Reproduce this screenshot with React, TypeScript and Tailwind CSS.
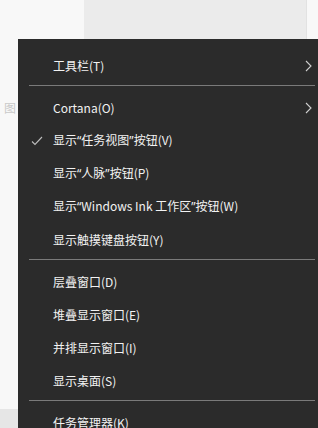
import { Fragment } from 'react'

type Item = { label: string; sub?: boolean; checked?: boolean } | 'sep'

const items: Item[] = [
  { label: '工具栏(T)', sub: true },
  'sep',
  { label: 'Cortana(O)', sub: true },
  { label: '显示“任务视图”按钮(V)', checked: true },
  { label: '显示“人脉”按钮(P)' },
  { label: '显示“Windows Ink 工作区”按钮(W)' },
  { label: '显示触摸键盘按钮(Y)' },
  'sep',
  { label: '层叠窗口(D)' },
  { label: '堆叠显示窗口(E)' },
  { label: '并排显示窗口(I)' },
  { label: '显示桌面(S)' },
  'sep',
  { label: '任务管理器(K)' },
]

// curly quotes are narrow in the original font, render them with a latin face
function Label({ text }: { text: string }) {
  const parts = text.split(/([“”])/)
  return (
    <>
      {parts.map((p, i) =>
        p === '“' || p === '”' ? (
          <span key={i} style={{ fontFamily: '"Noto Sans", sans-serif' }}>
            {p}
          </span>
        ) : (
          <Fragment key={i}>{p}</Fragment>
        )
      )}
    </>
  )
}

function Chevron() {
  return (
    <svg width="7" height="12" viewBox="0 0 7 12" className="text-[#cfcfcf]">
      <polyline points="1,1 6,6 1,11" fill="none" stroke="currentColor" strokeWidth="1.1" />
    </svg>
  )
}

function Check() {
  return (
    <svg width="12" height="10" viewBox="0 0 12 10" className="text-[#bdbdbd]">
      <polyline points="1,5.5 4,8.5 11,1" fill="none" stroke="currentColor" strokeWidth="1.1" />
    </svg>
  )
}

export default function App() {
  return (
    <div
      className="relative h-[428px] w-[318px] overflow-hidden bg-[#f8f8f8]"
      style={{ fontFamily: '"Noto Sans CJK SC", "Noto Sans", sans-serif' }}
    >
      {/* Background window content */}
      <div className="flex h-[39px]">
        <div className="w-[84px]" />
        <div className="w-[222px] bg-[#ebebeb]" />
        <div className="flex-1 border-l border-[#e2e2e2]" />
      </div>
      <div className="mt-[63px] pl-[4px] text-[12px] leading-none text-[#c9c9c9]">图</div>
      <div className="absolute bottom-0 left-0 h-[19px] w-[20px] bg-[#e6e6e6]" />

      {/* Context menu */}
      <div className="absolute left-[18px] top-[39px] w-[302px] bg-[#2b2b2b] pt-[10px] pb-[10px] text-[12px] text-[#f2f2f2]">
        {items.map((it, i) =>
          it === 'sep' ? (
            <div key={i} className="pt-[3px] pb-[5px] pl-[11px] pr-[5px]">
              <div className="h-px bg-[#7a7a7a]" />
            </div>
          ) : (
            <div key={i} className="flex h-[33px] items-center">
              <div className="flex w-[35px] justify-center pl-[2px]">{it.checked && <Check />}</div>
              <div className="flex-1 whitespace-nowrap">
                <Label text={it.label} />
              </div>
              <div className="flex w-[18px] justify-start pl-[3px]">{it.sub && <Chevron />}</div>
            </div>
          )
        )}
      </div>
    </div>
  )
}
